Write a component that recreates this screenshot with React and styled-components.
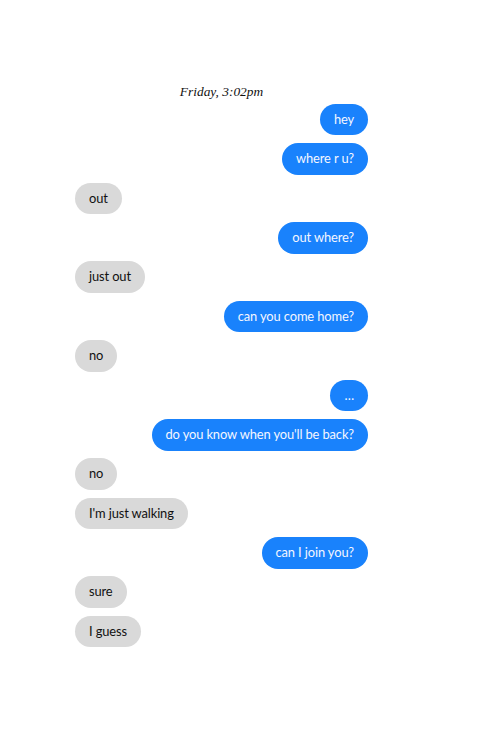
import React from "react";
import styled, { createGlobalStyle } from "styled-components";

const GlobalStyle = createGlobalStyle`
  body {
    margin: 0;
    background: #fff;
    font-family: "Source Sans Pro", Lato, "Noto Sans", sans-serif;
  }
`;

const Page = styled.div`
  padding: 80px 0 80px 75px;
`;

const Thread = styled.div`
  width: 293px;
  display: flex;
  flex-direction: column;
  gap: 7.8px;
`;

const Stamp = styled.div`
  font-family: "Liberation Serif", serif;
  font-style: italic;
  font-size: 13.4px;
  line-height: 20px;
  text-align: center;
  color: #111;
  margin-top: 2px;
  margin-bottom: -6px;
`;

const Bubble = styled.div`
  align-self: ${(p) => (p.$me ? "flex-end" : "flex-start")};
  background: ${(p) => (p.$me ? "#1982fc" : "#d9d9d9")};
  color: ${(p) => (p.$me ? "#f4f6ff" : "#111")};
  font-size: 12.9px;
  letter-spacing: -0.12px;
  line-height: 19.6px;
  padding: 6px 14px;
  border-radius: 16px;
  white-space: nowrap;
`;

const messages = [
  { me: true, text: "hey" },
  { me: true, text: "where r u?" },
  { me: false, text: "out" },
  { me: true, text: "out where?" },
  { me: false, text: "just out" },
  { me: true, text: "can you come home?" },
  { me: false, text: "no" },
  { me: true, text: "…" },
  { me: true, text: "do you know when you'll be back?" },
  { me: false, text: "no" },
  { me: false, text: "I'm just walking" },
  { me: true, text: "can I join you?" },
  { me: false, text: "sure" },
  { me: false, text: "I guess" },
];

export default function App() {
  return (
    <>
      <GlobalStyle />
      <Page>
        <Thread>
          <Stamp>Friday, 3:02pm</Stamp>
          {messages.map((m, i) => (
            <Bubble key={i} $me={m.me}>
              {m.text}
            </Bubble>
          ))}
        </Thread>
      </Page>
    </>
  );
}
